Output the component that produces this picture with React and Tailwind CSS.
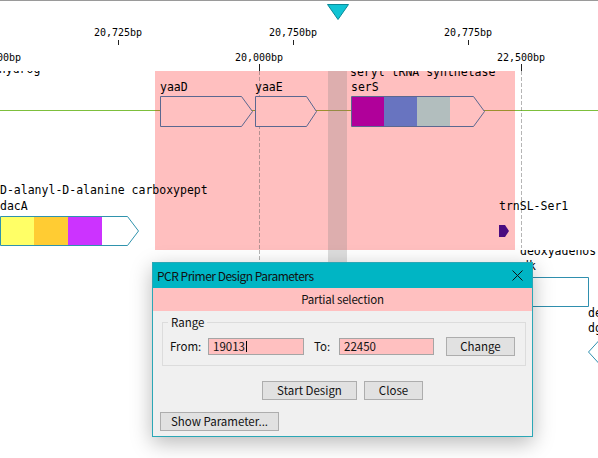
import React from 'react'

const MONO = '"DejaVu Sans Mono", "Liberation Mono", monospace'

function Gene({ x, y, w, tip, h = 30, stroke, fill = '#ffc0c0', segments = [] }) {
  // arrow box pointing right: body from x to x+w, tip extends to x+w+tip
  const pts = `${x},${y} ${x + w},${y} ${x + w + tip},${y + h / 2} ${x + w},${y + h} ${x},${y + h}`
  return (
    <g>
      <polygon points={pts} fill={fill} />
      {segments.map(s => (
        <rect key={s.x} x={s.x} y={y} width={s.w} height={h} fill={s.c} />
      ))}
      <polygon points={pts} fill="none" stroke={stroke} strokeWidth="1" />
    </g>
  )
}

function Label({ x, y, children, size = 11.5, anchor = 'start' }) {
  return (
    <text x={x} y={y} fontSize={size} fontFamily={MONO} fill="#000" textAnchor={anchor}>
      {children}
    </text>
  )
}

function GenomeCanvas() {
  return (
    <svg width="598" height="458" className="absolute left-0 top-0">
      <defs>
        <clipPath id="track1">
          <rect x="0" y="71" width="598" height="179" />
        </clipPath>
        <clipPath id="track2">
          <rect x="0" y="250" width="598" height="208" />
        </clipPath>
      </defs>

      {/* top border */}
      <rect x="0" y="0" width="598" height="1" fill="#9a9a9a" />

      {/* cursor marker */}
      <polygon points="327.5,4.5 348.5,4.5 338,19.5" fill="#10c4d4" stroke="#0a8a98" strokeWidth="1" />

      {/* ruler */}
      <Label x={118} y={36} size={10} anchor="middle">20,725bp</Label>
      <Label x={293} y={36} size={10} anchor="middle">20,750bp</Label>
      <Label x={468} y={36} size={10} anchor="middle">20,775bp</Label>
      <Label x={-3} y={61} size={10} anchor="middle">17,500bp</Label>
      <Label x={259} y={61} size={10} anchor="middle">20,000bp</Label>
      <Label x={521} y={61} size={10} anchor="middle">22,500bp</Label>
      {[118, 293, 468].map(x => (
        <rect key={x} x={x} y="40" width="1" height="5" fill="#222" />
      ))}
      {[259, 521].map(x => (
        <rect key={x} x={x} y="64" width="1" height="7" fill="#222" />
      ))}

      {/* track 1 */}
      <g clipPath="url(#track1)">
        <Label x={-15} y={73}>dehydrog</Label>
        <rect x="0" y="110" width="598" height="1" fill="#7dbf3c" />
        <rect x="155" y="71" width="360" height="179" fill="rgba(255,0,0,0.25)" />
        <line x1="259.5" y1="71" x2="259.5" y2="250" stroke="rgba(90,90,90,0.45)" strokeDasharray="4 2" />
        <line x1="521.5" y1="71" x2="521.5" y2="248" stroke="rgba(90,90,90,0.45)" strokeDasharray="4 2" />

        <Label x={160} y={91}>yaaD</Label>
        <Label x={255} y={91}>yaaE</Label>
        <Label x={350} y={76}>seryl tRNA synthetase</Label>
        <Label x={351} y={91}>serS</Label>
        <Gene x={160.5} y={96.5} w={81} tip={11} stroke="#5b6890" />
        <Gene x={255.5} y={96.5} w={51} tip={10} stroke="#5b6890" />
        <Gene
          x={351.5}
          y={96.5}
          w={122}
          tip={11}
          stroke="#5b6890"
          segments={[
            { x: 352, w: 32, c: '#b0009a' },
            { x: 384, w: 33, c: '#6874c0' },
            { x: 417, w: 33, c: '#b2bebe' },
          ]}
        />

        <Label x={0} y={194}>D-alanyl-D-alanine carboxypept</Label>
        <Label x={0} y={210}>dacA</Label>
        <Gene
          x={0.5}
          y={216.5}
          w={127}
          tip={11}
          h={29}
          fill="#fff"
          stroke="#2f93ad"
          segments={[
            { x: 1, w: 33, c: '#ffff66' },
            { x: 34, w: 34, c: '#ffcc33' },
            { x: 68, w: 34, c: '#cc33ff' },
          ]}
        />

        <Label x={499} y={210}>trnSL-Ser1</Label>
        <polygon points="499,225 505,225 509,231 505,237 499,237" fill="#4a0c80" />
      </g>

      {/* selection band */}
      <rect x="328" y="71" width="19" height="229" fill="rgba(128,128,128,0.27)" />

      {/* track 2 */}
      <g clipPath="url(#track2)">
        <line x1="259.5" y1="250" x2="259.5" y2="300" stroke="rgba(90,90,90,0.45)" strokeDasharray="4 2" />
        <Label x={520} y={255}>deoxyadenos</Label>
        <Label x={522} y={270}>dk</Label>
        <polygon points="530.5,277.5 588.5,277.5 588.5,306.5 530.5,306.5 520.5,292" fill="#fff" stroke="#2f8fae" />
        <Label x={588} y={317}>de</Label>
        <Label x={588} y={332}>dg</Label>
        <polyline points="599,340.5 588.5,352 599,363.5" fill="none" stroke="#2f8fae" />
      </g>
    </svg>
  )
}

function Button({ className, children }) {
  return (
    <button
      className={`flex h-[19px] items-center justify-center border border-[#adadad] bg-[#e1e1e1] text-[11.5px] leading-none text-[#111] ${className}`}
    >
      {children}
    </button>
  )
}

function PrimerDialog() {
  return (
    <div className="absolute left-[152px] top-[262px] flex h-[175px] w-[381px] flex-col border border-[#2ba7b6] bg-[#f0f0f0] font-['Noto_Sans_CJK_JP',sans-serif] text-[#111] shadow-[0_6px_20px_rgba(0,0,0,0.28)]">
      <div className="flex h-[25px] items-center justify-between bg-[#00b5c4] pl-[4px] pr-[9px]">
        <span className="text-[12px] leading-none tracking-[-0.5px]">PCR Primer Design Parameters</span>
        <svg width="11" height="11" viewBox="0 0 11 11">
          <path d="M0.5 0.5 L10.5 10.5 M10.5 0.5 L0.5 10.5" stroke="#111" strokeWidth="1" />
        </svg>
      </div>
      <div className="flex h-[23px] items-center justify-center bg-[#ffc0c0] text-[11.5px] leading-none tracking-[-0.2px]">
        Partial selection
      </div>

      <div className="flex flex-1 flex-col px-[8px]">
        <fieldset className="ml-[1px] mr-[-2px] mt-[5px] h-[50px] border border-[#dcdcdc] px-[7px]">
          <legend className="ml-[-2px] px-[3px] text-[11.5px] leading-[13px]">Range</legend>
          <div className="mt-[8px] flex items-center text-[11.5px] leading-none">
            <span className="w-[38px]">From:</span>
            <div className="flex h-[17px] w-[96px] items-center border border-[#a5a5a5] bg-[#ffc0c0] pl-[4px]">
              19013<span className="ml-[1px] h-[11px] w-[1px] bg-black" />
            </div>
            <span className="ml-[10px] w-[25px]">To:</span>
            <div className="flex h-[17px] w-[95px] items-center border border-[#a5a5a5] bg-[#ffc0c0] pl-[4px]">
              22450
            </div>
            <Button className="ml-[12px] h-[18px] w-[69px]">Change</Button>
          </div>
        </fieldset>

        <div className="mt-[15px] flex justify-center gap-[7px]">
          <Button className="w-[95px]">Start Design</Button>
          <Button className="w-[59px]">Close</Button>
        </div>

        <div className="mt-[12px] flex">
          <Button className="ml-[-1px] w-[119px]">Show Parameter...</Button>
        </div>
      </div>
    </div>
  )
}

export default function App() {
  return (
    <div className="relative h-[458px] w-[598px] overflow-hidden bg-white">
      <GenomeCanvas />
      <PrimerDialog />
    </div>
  )
}
